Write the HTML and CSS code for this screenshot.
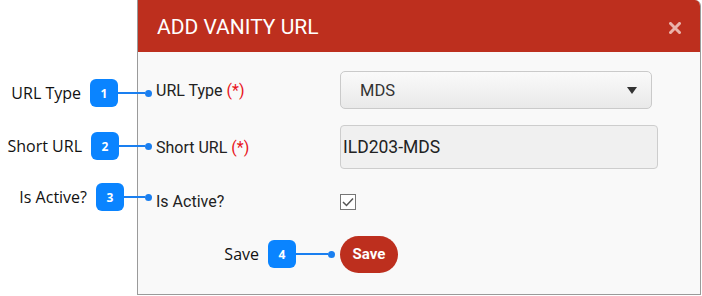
FILE: index.html
```html
<!DOCTYPE html>
<html lang="en">
<head>
    <meta charset="UTF-8">
    <title>Add Vanity URL</title>
    <link rel="stylesheet" href="styles.css">
</head>
<body>
<div class="stage">
    <div class="modal">
        <div class="modal-head">
            <h3>ADD VANITY URL</h3>
            <svg class="close" width="12" height="12" viewBox="0 0 12 12"><path d="M1.5 1.5 L10.5 10.5 M10.5 1.5 L1.5 10.5" stroke="#eab3aa" stroke-width="3" stroke-linecap="square"/></svg>
        </div>
        <div class="modal-body">
            <label class="field-label">URL Type <span class="req">(*)</span></label>
            <div class="cell">
                <div class="select">
                    <span>MDS</span>
                    <svg width="10" height="7" viewBox="0 0 10 7"><path d="M0 0 H10 L5 7 Z" fill="#333"/></svg>
                </div>
            </div>

            <label class="field-label">Short URL <span class="req">(*)</span></label>
            <div class="cell">
                <div class="text-input">ILD203-MDS</div>
            </div>

            <label class="field-label">Is Active?</label>
            <div class="cell">
                <span class="check">
                    <svg width="12" height="10" viewBox="0 0 12 10"><path d="M1 5 L4.5 8.5 L11 1.5" fill="none" stroke="#555" stroke-width="1.5"/></svg>
                </span>
            </div>

            <div></div>
            <div class="cell">
                <button class="save">Save</button>
            </div>
        </div>
    </div>

    <div class="callout c1"><span class="note">URL Type</span><span class="badge">1</span><span class="line"></span><span class="dot"></span></div>
    <div class="callout c2"><span class="note">Short URL</span><span class="badge">2</span><span class="line"></span><span class="dot"></span></div>
    <div class="callout c3"><span class="note">Is Active?</span><span class="badge">3</span><span class="line"></span><span class="dot"></span></div>
    <div class="callout c4"><span class="note">Save</span><span class="badge">4</span><span class="line"></span><span class="dot"></span></div>
</div>
</body>
</html>
```
FILE: styles.css
```css
body{
    margin: 0;
    background: #fff;
    font-family: Roboto, "Liberation Sans", sans-serif;
}
.stage{
    position: relative;
    width: 702px;
    height: 296px;
    overflow: hidden;
}
.modal{
    box-sizing: border-box;
    margin-left: 137px;
    width: 564px;
    height: 295px;
    background: #f9f9f9;
    border: 1px solid #9a9a9a;
    border-top: none;
    border-radius: 0 6px 0 0;
    overflow: hidden;
}
.modal-head{
    height: 52px;
    background: #bd2f1e;
    display: flex;
    align-items: center;
    justify-content: space-between;
    padding: 0 19px 0 19px;
}
.modal-head h3{
    margin: 0;
    color: #fff;
    font-size: 21px;
    font-weight: 400;
    padding-top: 2px;
}
.close{
    margin-top: 4px;
}
.modal-body{
    display: grid;
    grid-template-columns: 184px auto;
    grid-template-rows: 56px 58px 50px 56px;
    padding: 10px 0 0 18px;
}
.field-label{
    display: flex;
    align-items: center;
    font-size: 16px;
    color: #222;
}
.req{
    color: #e8141b;
    margin-left: 4px;
}
.cell{
    display: flex;
    align-items: center;
}
.select{
    box-sizing: border-box;
    width: 312px;
    height: 38px;
    border: 1px solid #cacaca;
    border-radius: 5px;
    background: linear-gradient(#fafafa, #e9e9e9);
    display: flex;
    align-items: center;
    justify-content: space-between;
    padding: 0 14px 0 19px;
    font-size: 16.5px;
    color: #333;
}
.text-input{
    box-sizing: border-box;
    width: 318px;
    height: 44px;
    border: 1px solid #cdcdcd;
    border-radius: 4px;
    background: #f0f0f0;
    display: flex;
    align-items: center;
    padding-left: 2px;
    font-size: 17.5px;
    color: #222;
}
.check{
    box-sizing: border-box;
    width: 16px;
    height: 16px;
    border: 1px solid #767676;
    background: #fff;
    display: flex;
    align-items: center;
    justify-content: center;
    margin-top: 2px;
}
.save{
    width: 58px;
    height: 37px;
    border: none;
    border-radius: 19px;
    background: #bd2f1e;
    color: #fff;
    font-family: Roboto, "Liberation Sans", sans-serif;
    font-weight: 700;
    font-size: 15px;
    padding: 0;
}

/* annotation callouts */
.callout{
    position: absolute;
    display: flex;
    align-items: center;
    height: 28px;
}
.note{
    font-family: "Open Sans", "DejaVu Sans", sans-serif;
    font-size: 16px;
    color: #111;
    margin-right: 9px;
}
.badge{
    width: 28px;
    height: 28px;
    border-radius: 6px;
    background: #0a84ff;
    color: #fff;
    font-family: "Open Sans", sans-serif;
    font-weight: 700;
    font-size: 12px;
    display: flex;
    align-items: center;
    justify-content: center;
}
.line{
    height: 1.5px;
    background: #1a7ff0;
}
.dot{
    width: 7px;
    height: 7px;
    border-radius: 50%;
    background: #1a7ff0;
}
.c1{ top: 79px; right: 550px; }
.c1 .line{ width: 27px; }
.c2{ top: 132px; right: 550px; }
.c2 .line{ width: 26px; }
.c3{ top: 183px; right: 550px; }
.c3 .line{ width: 21px; }
.c4{ top: 240px; right: 367px; }
.c4 .line{ width: 32px; }
```
